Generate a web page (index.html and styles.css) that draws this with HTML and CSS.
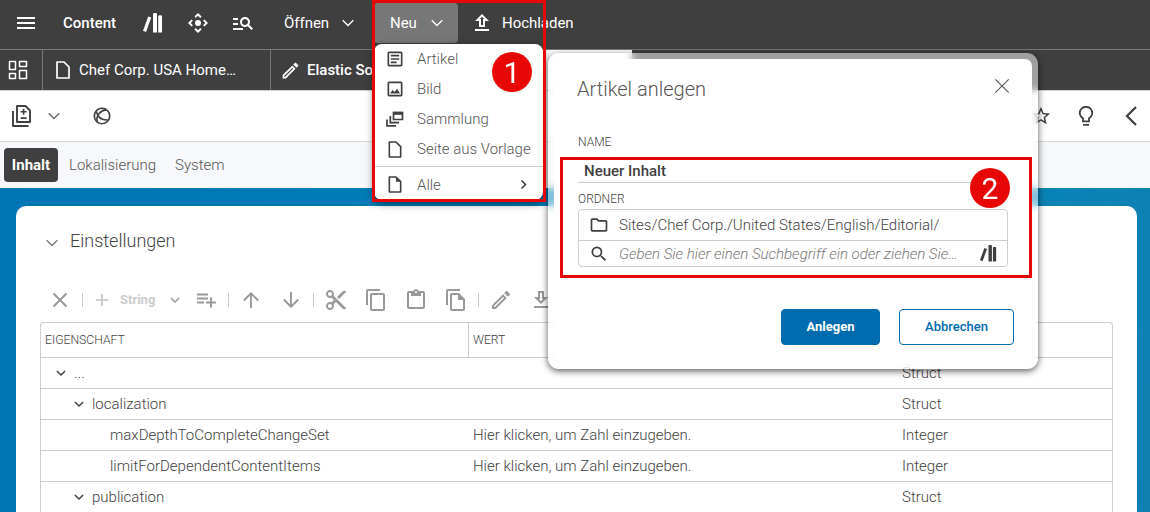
FILE: index.html
```html
<!DOCTYPE html>
<html lang="de">
<head>
<meta charset="utf-8">
<title>Content</title>
<link rel="stylesheet" href="styles.css">
</head>
<body>
<svg class="sprite" aria-hidden="true">
  <symbol id="library" viewBox="0 0 20 20"><path d="M5.2 3.4 8.3 4.6 3 19 0 17.7zM10 .7 11 0h2l1 .7V19.500h-4zM15.200 3l.8-.7h2.200l.8.7v16.500h-3.800z"/></symbol>
  <symbol id="move" viewBox="0 0 20 20"><circle cx="10" cy="10" r="3"/><path d="m10 0 3.600 3.600-1.300 1.300L10 2.700 7.700 4.900 6.400 3.600zM10 20l3.600-3.600-1.300-1.300-2.300 2.200-2.300-2.200-1.300 1.300zM0 10l3.600-3.600 1.300 1.300L2.700 10l2.200 2.300-1.300 1.300zM20 10l-3.600-3.600-1.300 1.300 2.200 2.300-2.200 2.300 1.300 1.300z"/></symbol>
  <symbol id="list-search" viewBox="0 0 24 24"><path d="M7 9H2V7h5v2zm0 3H2v2h5v-2zm13.590 7l-3.830-3.830c-.8.520-1.740.830-2.760.830-2.760 0-5-2.240-5-5s2.240-5 5-5 5 2.240 5 5c0 1.020-.310 1.960-.830 2.750L22 17.590 20.590 19zM17 11c0-1.650-1.350-3-3-3s-3 1.350-3 3 1.350 3 3 3 3-1.350 3-3zM2 19h10v-2H2v2z"/></symbol>
  <symbol id="upload" viewBox="0 0 24 24"><path fill-rule="evenodd" d="M9 16h6v-6h4l-7-7-7 7h4zM12 5.830 14.170 8H13v6h-2V8H9.830zM5 18h14v2H5z"/></symbol>
  <symbol id="download" viewBox="0 0 24 24"><path d="M19 9h-4V3H9v6H5l7 7 7-7zm-8 2V5h2v6h1.170L12 13.170 9.830 11H11zm-6 7h14v2H5z"/></symbol>
  <symbol id="dash" viewBox="0 0 20 20"><path fill="none" stroke="currentColor" stroke-width="1.500" stroke-linejoin="round" d="M1.500 1.500h6v8h-6zM11.500 1.500h7v5h-7zM1.500 13.500h6v5h-6zM11.500 10.500h7v8h-7z"/></symbol>
  <symbol id="page" viewBox="0 0 16 18"><path fill="none" stroke="currentColor" stroke-width="1.700" stroke-linejoin="round" d="M2 1h7l5 5v11H2z"/></symbol>
  <symbol id="page-fold" viewBox="0 0 16 18"><path fill="none" stroke="currentColor" stroke-width="1.700" stroke-linejoin="round" d="M2 1h7l5 5v11H2z"/><path d="M9 1v5h5z"/></symbol>
  <symbol id="edit" viewBox="0 0 24 24"><path d="M14.060 9.020l.920.920L5.920 19H5v-.920l9.060-9.060M17.660 3c-.250 0-.510.100-.700.290l-1.830 1.830 3.750 3.750 1.830-1.830c.390-.390.390-1.020 0-1.410l-2.340-2.340c-.200-.200-.450-.290-.710-.290zm-3.600 3.190L3 17.250V21h3.750L17.810 9.940l-3.750-3.750z"/></symbol>
  <symbol id="version" viewBox="0 0 20 22"><path fill="none" stroke="currentColor" stroke-width="1.900" stroke-linejoin="round" d="M5 1h8.500L18 5.500V17H5zM1 6v15h15.500"/><path d="M10.800 3.700h1.600v2.200h2.200v1.600h-2.200v2.200h-1.600V7.500H8.600V5.900h2.200zM8.600 12.200h6v1.700h-6z"/></symbol>
  <symbol id="globe" viewBox="0 0 18 18"><g fill="none" stroke="currentColor" stroke-width="1.600"><circle cx="9" cy="9" r="7.700"/><path d="M3.200 4.300C4.500 9.500 8.500 13.600 15.600 13M13.300 2.600C7.500 3.500 2.500 8.500 4.300 15.200"/></g></symbol>
  <symbol id="chev" viewBox="0 0 12 8"><path fill="none" stroke="currentColor" stroke-width="1.300" d="m.7 1.200 5.300 5.300 5.300-5.300"/></symbol>
  <symbol id="chev-bold" viewBox="0 0 10 7"><path fill="none" stroke="currentColor" stroke-width="1.500" d="m.9 1 4.100 4 4.100-4"/></symbol>
  <symbol id="article" viewBox="0 0 24 24"><path d="M19 5v14H5V5h14m0-2H5c-1.100 0-2 .9-2 2v14c0 1.100.9 2 2 2h14c1.100 0 2-.9 2-2V5c0-1.100-.9-2-2-2zM14 17H7v-2h7v2zm3-4H7v-2h10v2zm0-4H7V7h10v2z"/></symbol>
  <symbol id="image" viewBox="0 0 24 24"><path d="M19 5v14H5V5h14m0-2H5c-1.100 0-2 .9-2 2v14c0 1.100.9 2 2 2h14c1.100 0 2-.9 2-2V5c0-1.100-.9-2-2-2zM6 17.500l3.200-4.200 2.200 2.200 3-3.800 3.600 5.800z"/></symbol>
  <symbol id="stack" viewBox="0 0 18 16"><path fill="none" stroke="currentColor" stroke-width="1.700" d="M7.500 1.500h9v7h-9zM4.300 5v6.700H13M1 8.500v6.300h9"/><path d="M7 .8h10v3H7z"/></symbol>
  <symbol id="cut" viewBox="0 0 24 24"><path d="M9.640 7.640c.230-.500.360-1.050.360-1.640 0-2.210-1.790-4-4-4S2 3.790 2 6s1.790 4 4 4c.590 0 1.140-.130 1.640-.360L10 12l-2.360 2.360C7.140 14.130 6.590 14 6 14c-2.210 0-4 1.790-4 4s1.790 4 4 4 4-1.790 4-4c0-.590-.130-1.140-.360-1.640L12 14l7 7h3v-1L9.640 7.640zM6 8c-1.100 0-2-.890-2-2s.9-2 2-2 2 .890 2 2-.9 2-2 2zm0 12c-1.100 0-2-.890-2-2s.9-2 2-2 2 .890 2 2-.9 2-2 2zm6-7.500c-.280 0-.500-.220-.500-.500s.220-.500.500-.500.500.220.500.500-.220.500-.500.500zM19 3l-6 6 2 2 7-7V3z"/></symbol>
  <symbol id="copy" viewBox="0 0 24 24"><path d="M16 1H4c-1.100 0-2 .9-2 2v14h2V3h12V1zm3 4H8c-1.100 0-2 .9-2 2v14c0 1.100.9 2 2 2h11c1.100 0 2-.9 2-2V7c0-1.100-.9-2-2-2zm0 16H8V7h11v14z"/></symbol>
  <symbol id="paste" viewBox="0 0 24 24"><path d="M19 3h-4.200a3 3 0 0 0-5.600 0H5c-1.100 0-2 .9-2 2v14c0 1.100.9 2 2 2h14c1.100 0 2-.9 2-2V5c0-1.100-.9-2-2-2zm-7 0a1 1 0 1 1 0 2 1 1 0 0 1 0-2zm7 16H5V5h2v3h10V5h2z"/></symbol>
  <symbol id="file-copy" viewBox="0 0 24 24"><path d="M16 1H4c-1.100 0-2 .9-2 2v14h2V3h12V1zm-1 4H8c-1.100 0-2 .9-2 2v14c0 1.100.9 2 2 2h11c1.100 0 2-.9 2-2V11l-6-6zM8 21V7h6v5h5v9H8z"/></symbol>
  <symbol id="cross" viewBox="0 0 16 16"><path fill="none" stroke="currentColor" stroke-width="2" d="m1.500 1.500 13 13m0-13-13 13"/></symbol>
  <symbol id="cross-thin" viewBox="0 0 16 16"><path fill="none" stroke="currentColor" stroke-width="1.100" d="m1.300 1.300 13.400 13.400m0-13.400L1.300 14.700"/></symbol>
  <symbol id="playlist" viewBox="2 0 21 24"><path d="M14 9.500H3v2h11zm0-4H3v2h11zM18 13.500v-4h-2v4h-4v2h4v4h2v-4h4v-2zM3 15.500h7v-2H3z"/></symbol>
  <symbol id="arrow" viewBox="0 0 16 16"><path fill="none" stroke="currentColor" stroke-width="1.900" d="M8 16V1.500M.8 8.500 8 1.300l7.200 7.200"/></symbol>
  <symbol id="star" viewBox="0 0 24 24"><path d="M22 9.240l-7.190-.620L12 2 9.190 8.630 2 9.240l5.460 4.730L5.820 21 12 17.270 18.180 21l-1.630-7.030L22 9.240zM12 15.400l-3.760 2.270 1-4.280-3.320-2.880 4.380-.380L12 6.100l1.710 4.040 4.380.380-3.320 2.880 1 4.280L12 15.400z"/></symbol>
  <symbol id="bulb" viewBox="0 0 16 20"><path fill="none" stroke="currentColor" stroke-width="1.800" d="M5 15.300v-2.900a6.200 6.200 0 1 1 6 0v2.900z"/><path d="M5 18h6v1.700H5z"/></symbol>
  <symbol id="folder" viewBox="0 0 24 24"><path d="M9.170 6l2 2H20v10H4V6h5.170M10 4H4c-1.100 0-2 .9-2 2v12c0 1.100.9 2 2 2h16c1.100 0 2-.9 2-2V8c0-1.100-.9-2-2-2h-8l-2-2z"/></symbol>
  <symbol id="search" viewBox="0 0 24 24"><path d="M15.500 14h-.790l-.280-.270A6.470 6.470 0 0 0 16 9.500 6.500 6.500 0 1 0 9.500 16c1.610 0 3.090-.590 4.230-1.570l.270.280v.790l5 4.990L20.490 19l-4.990-5zm-6 0C7.010 14 5 11.990 5 9.500S7.010 5 9.500 5 14 7.010 14 9.500 11.990 14 9.500 14z"/></symbol>
</svg>

<header class="topbar">
  <span class="burger"></span>
  <span class="brand">Content</span>
  <nav class="quick">
    <svg width="20" height="20"><use href="#library"/></svg>
    <svg width="20" height="20"><use href="#move"/></svg>
    <svg width="24" height="24"><use href="#list-search"/></svg>
  </nav>
  <button class="top-btn open">Öffnen<svg width="12" height="8"><use href="#chev"/></svg></button>
  <button class="top-btn new">Neu<svg width="12" height="8"><use href="#chev"/></svg></button>
  <button class="top-btn load"><svg width="24" height="24"><use href="#upload"/></svg>Hochladen</button>
</header>

<div class="tabs">
  <div class="tab home"><svg width="20" height="20"><use href="#dash"/></svg></div>
  <div class="tab doc"><svg width="16" height="18"><use href="#page"/></svg>Chef Corp. USA Home…</div>
  <div class="tab edit"><svg width="21" height="21"><use href="#edit"/></svg>Elastic So</div>
  <div class="tab active"></div>
</div>

<div class="toolbar">
  <svg class="t-version" width="20" height="22"><use href="#version"/></svg>
  <svg class="t-chev" width="12" height="8"><use href="#chev"/></svg>
  <svg width="18" height="18"><use href="#globe"/></svg>
  <div class="tools-right">
    <svg width="22" height="22"><use href="#star"/></svg>
    <svg width="16" height="20"><use href="#bulb"/></svg>
    <svg width="12" height="20" viewBox="0 0 12 20"><path fill="none" stroke="currentColor" stroke-width="2.200" d="M11 1 2 10l9 9"/></svg>
  </div>
</div>

<nav class="subtabs">
  <span class="sub on">Inhalt</span><span class="sub lok">Lokalisierung</span><span class="sub">System</span>
</nav>

<main class="stage">
  <section class="card">
    <h2 class="section-title"><svg width="12" height="8"><use href="#chev"/></svg>Einstellungen</h2>
    <div class="actions">
      <span class="tool"><svg width="16" height="16"><use href="#cross"/></svg></span>
      <i class="sep"></i>
      <span class="adder"><b class="plus"></b><span>String</span><svg width="10" height="7"><use href="#chev-bold"/></svg></span>
      <span class="tool"><svg width="21" height="24"><use href="#playlist"/></svg></span>
      <i class="sep"></i>
      <span class="tool"><svg width="16" height="16"><use href="#arrow"/></svg></span>
      <span class="tool"><svg class="down" width="16" height="16"><use href="#arrow"/></svg></span>
      <i class="sep"></i>
      <span class="tool"><svg width="24" height="24"><use href="#cut"/></svg></span>
      <span class="tool"><svg width="24" height="24"><use href="#copy"/></svg></span>
      <span class="tool"><svg width="24" height="24"><use href="#paste"/></svg></span>
      <span class="tool"><svg width="24" height="24"><use href="#file-copy"/></svg></span>
      <i class="sep"></i>
      <span class="tool"><svg width="24" height="24"><use href="#edit"/></svg></span>
      <span class="tool"><svg width="24" height="24"><use href="#download"/></svg></span>
    </div>
    <div class="table">
      <div class="row head"><span class="first">EIGENSCHAFT</span><span class="value">WERT</span><span></span></div>
      <div class="row"><span class="lvl1"><svg width="10" height="7"><use href="#chev-bold"/></svg>...</span><span></span><span>Struct</span></div>
      <div class="row"><span class="lvl2"><svg width="10" height="7"><use href="#chev-bold"/></svg>localization</span><span></span><span>Struct</span></div>
      <div class="row"><span class="lvl3">maxDepthToCompleteChangeSet</span><span>Hier klicken, um Zahl einzugeben.</span><span>Integer</span></div>
      <div class="row"><span class="lvl3">limitForDependentContentItems</span><span>Hier klicken, um Zahl einzugeben.</span><span>Integer</span></div>
      <div class="row"><span class="lvl2"><svg width="10" height="7"><use href="#chev-bold"/></svg>publication</span><span></span><span>Struct</span></div>
    </div>
  </section>
</main>

<div class="menu">
  <div class="item"><svg width="20" height="20"><use href="#article"/></svg>Artikel</div>
  <div class="item"><svg width="20" height="20"><use href="#image"/></svg>Bild</div>
  <div class="item"><svg width="20" height="16"><use href="#stack"/></svg>Sammlung</div>
  <div class="item"><svg width="20" height="17"><use href="#page"/></svg>Seite aus Vorlage</div>
  <div class="item all"><svg width="20" height="17"><use href="#page-fold"/></svg>Alle<svg class="more" width="10" height="7"><use href="#chev-bold"/></svg></div>
</div>

<div class="dialog-frame">
  <div class="dialog">
    <div class="dialog-head"><span>Artikel anlegen</span><svg width="16" height="16"><use href="#cross-thin"/></svg></div>
    <label class="label">NAME</label>
    <div class="name-field">Neuer Inhalt</div>
    <label class="label folder-label">ORDNER</label>
    <div class="picker">
      <div class="path"><svg width="20" height="20"><use href="#folder"/></svg>Sites/Chef Corp./United States/English/Editorial/</div>
      <div class="find"><svg width="20" height="20"><use href="#search"/></svg><span>Geben Sie hier einen Suchbegriff ein oder ziehen Sie…</span><svg class="lib" width="17" height="17"><use href="#library"/></svg></div>
    </div>
    <div class="buttons"><button class="btn primary">Anlegen</button><button class="btn">Abbrechen</button></div>
  </div>
</div>

<div class="mark mark-one"></div>
<div class="mark mark-two"></div>
<div class="badge badge-one">1</div>
<div class="badge badge-two">2</div>
</body>
</html>
```
FILE: styles.css
```css
* { box-sizing: border-box; }
body {
  margin: 0;
  width: 1150px;
  height: 512px;
  overflow: hidden;
  display: flex;
  flex-direction: column;
  position: relative;
  font: 300 15px/20px Roboto, "Liberation Sans", sans-serif;
  color: #3f3f3f;
}
svg { fill: currentColor; flex: none; display: block; }
.sprite { position: absolute; width: 0; height: 0; }
button { font: inherit; color: inherit; border: 0; background: none; padding: 0; }

.topbar { height: 50px; flex: none; display: flex; align-items: center; padding: 0 0 4px 17px; background: #3f3f3f; border-bottom: 1px solid #777; color: #fff; }
.burger { width: 18px; height: 12px; border: solid #fff; border-width: 2px 0; background: linear-gradient(#fff, #fff) 0 3px / 100% 2px no-repeat; }
.brand { width: 80px; margin-left: 28px; font-weight: 500; }
.quick { display: flex; align-items: center; gap: 25px; width: 141px; }
.quick svg:last-child { margin-left: -2px; }
.top-btn { display: flex; align-items: center; height: 40px; font-weight: 400; }
.open { width: 90px; justify-content: space-between; padding-right: 20px; }
.new { width: 84px; background: #777; border-radius: 4px; padding: 0 15px 0 16px; justify-content: space-between; }
.load { margin-left: 12px; gap: 8px; }
.open, .new, .load { letter-spacing: -.03px; }

.tabs { height: 41px; flex: none; display: flex; background: #3f3f3f; color: #fff; border-bottom: 1px solid #d0d0d0; font-weight: 400; }
.tab { display: flex; align-items: center; border-right: 1px solid #777; white-space: nowrap; }
.home { width: 43px; padding-left: 8px; }
.doc { width: 228px; gap: 8px; padding-left: 12px; }
.edit { width: 179px; padding-left: 9px; gap: 6px; font-weight: 500; }
.active { width: 182px; background: #fff; border: 0; }

.toolbar { height: 51px; flex: none; display: flex; align-items: center; padding-left: 12px; border-bottom: 1px solid #d9d9d9; background: #fff; }
.t-chev { margin: 0 33px 0 16px; color: #666; }
.tools-right { display: flex; align-items: center; margin-left: auto; padding-right: 13px; gap: 26px; }
.tools-right svg:last-child { margin-left: 5px; }

.subtabs { height: 46px; flex: none; display: flex; align-items: center; padding-left: 4px; background: #f7f8fb; }
.sub { color: #555; }
.on { width: 54px; height: 34px; line-height: 34px; text-align: center; border-radius: 4px; background: #3f3f3f; color: #fff; font-weight: 700; margin-right: 11px; }
.lok { width: 106px; }

.stage { flex: 1; min-height: 0; padding: 18px 13px 0 16px; background: linear-gradient(100deg, #0076b4, #0585b9 80%, #1180b2); }
.card { height: 306px; border-radius: 10px 10px 0 0; background: #fff; padding: 24px 24px 0; }
.section-title { display: flex; align-items: center; gap: 12px; margin: 0; padding-left: 6px; font-size: 18px; line-height: 22px; font-weight: 300; }
.actions { display: flex; align-items: center; height: 40px; margin-top: 28px; color: #999; }
.section-title svg { margin-top: 3px; color: #777; }
.tool { width: 40px; display: flex; justify-content: center; flex: none; }
.sep { width: 1px; height: 14px; margin: 0 2px; background: #ccc; flex: none; }
.down { transform: rotate(180deg); }
.adder { width: 101px; display: flex; align-items: center; padding-left: 11px; font-size: 13px; font-weight: 700; color: #ccc; }
.adder > span { width: 50px; margin-left: 12px; }
.adder svg { color: #999; }
.plus { width: 12px; height: 12px; background: linear-gradient(#ccc, #ccc) 50% / 2px 100% no-repeat, linear-gradient(#ccc, #ccc) 50% / 100% 2px no-repeat; }
.table { width: 1073px; height: 190px; overflow: hidden; margin-top: 2px; border: 1px solid #ccc; border-bottom: 0; border-radius: 4px 4px 0 0; }
.row { display: grid; grid-template-columns: 432px 429px 1fr; align-items: center; height: 31px; border-bottom: 1px solid #ccc; }
.row:last-child { height: 30px; border: 0; }
.row > span { display: flex; align-items: center; }
.head { height: 35px; font-size: 12.200px; }
.head .first { padding-left: 4px; }
.head .value { margin-left: -5px; height: 34px; padding-left: 4px; border-left: 1px solid #ccc; }
.lvl1 { padding-left: 15px; gap: 8px; }
.lvl2 { padding-left: 33px; gap: 8px; }
.lvl3 { padding-left: 69px; }

.menu { position: absolute; left: 374px; top: 44px; width: 169px; height: 156px; border-radius: 8px; background: #fff; color: #555; box-shadow: 0 3px 8px rgba(0, 0, 0, .6); }
.item { display: flex; align-items: center; height: 30px; padding-left: 11px; gap: 12px; white-space: nowrap; }
.item svg { color: #3f3f3f; }
.all { border-top: 1px solid #ccc; margin-top: 2px; height: 36px; }
.more { margin-left: auto; margin-right: 14px; transform: rotate(-90deg); }

.dialog-frame { position: absolute; left: 548px; top: 53px; width: 490px; height: 316px; padding: 6px; border-radius: 11px; background: rgba(255, 255, 255, .5); backdrop-filter: blur(4px); box-shadow: 0 2px 7px rgba(0, 0, 0, .65); }
.dialog { height: 304px; border-radius: 7px; background: #fff; padding: 18px 18px 0 23px; }
.dialog-head { display: flex; justify-content: space-between; align-items: center; height: 24px; padding-right: 4px; font-size: 20px; color: #555; }
.dialog-head svg { margin-top: -7px; }
.label { display: block; margin: 32px 0 0 1px; height: 18px; line-height: 18px; font-size: 12px; }
.name-field { width: 430px; height: 32px; margin-left: 1px; padding: 10px 0 0 6px; line-height: 20px; font-weight: 500; border-bottom: 1px solid #ccc; }
.folder-label { margin-top: 7px; }
.picker { width: 430px; margin: 1px 0 0 1px; border: 1px solid #ccc; border-radius: 4px; }
.path, .find { display: flex; align-items: center; gap: 10px; padding-left: 10px; white-space: nowrap; }
.path { height: 31px; border-bottom: 1px solid #ccc; }
.find { height: 25px; font-style: italic; color: #777; }
.find svg { color: #3f3f3f; }
.find span { width: 341px; }
.lib { margin-left: 10px; }
.buttons { display: flex; justify-content: flex-end; gap: 19px; margin-top: 42px; }
.btn { width: 115px; height: 36px; border: 1px solid #006cb0; border-radius: 4px; color: #006cb0; font-size: 13px; font-weight: 500; }
.primary { width: 99px; background: #006cb0; color: #fff; font-weight: 700; }

.mark { position: absolute; border: 3px solid #e80707; }
.mark-one { left: 372px; top: 0; width: 174px; height: 202px; }
.mark-two { left: 560px; top: 157px; width: 472px; height: 121px; }
.badge { position: absolute; width: 40px; height: 40px; border-radius: 50%; background: #e80707; color: #fff; font: 400 30px/42px Roboto, "Liberation Sans", sans-serif; text-align: center; }
.badge-one { left: 492px; top: 52px; }
.badge-two { left: 970px; top: 168px; }
```
